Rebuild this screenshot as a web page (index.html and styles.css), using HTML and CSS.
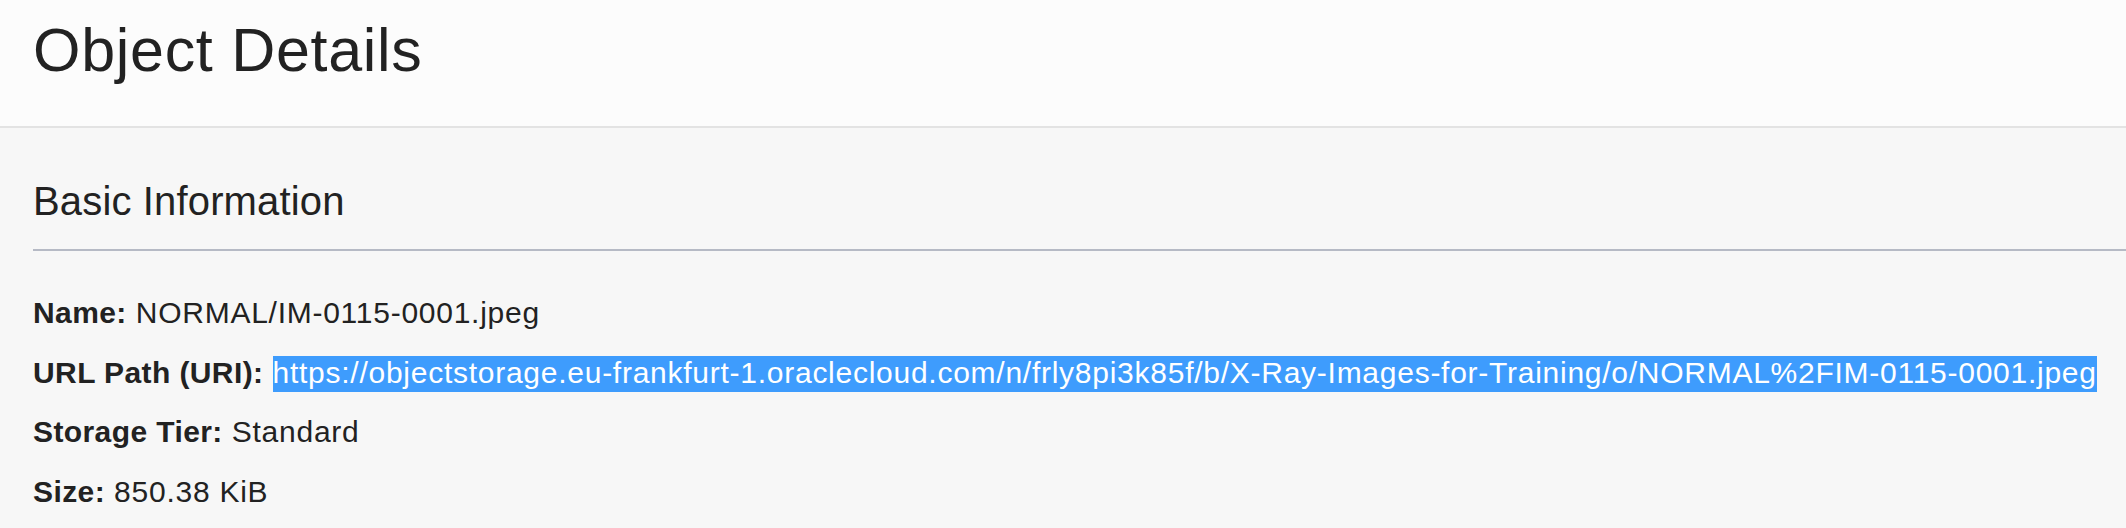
FILE: index.html
```html
<!DOCTYPE html>
<html lang="en">
<head>
<meta charset="utf-8">
<title>Object Details</title>
<link rel="stylesheet" href="styles.css">
</head>
<body>
<header class="page-header">
  <h1 class="page-title">Object Details</h1>
</header>
<main class="details">
  <h2 class="section-title">Basic Information</h2>
  <div class="info-list">
    <div class="info-row"><span class="label">Name:</span> NORMAL/IM-0115-0001.jpeg</div>
    <div class="info-row"><span class="label">URL Path (URI):</span> <span class="selected">https://objectstorage.eu-frankfurt-1.oraclecloud.com/n/frly8pi3k85f/b/X-Ray-Images-for-Training/o/NORMAL%2FIM-0115-0001.jpeg</span></div>
    <div class="info-row"><span class="label">Storage Tier:</span> Standard</div>
    <div class="info-row"><span class="label">Size:</span> 850.38 KiB</div>
  </div>
</main>
</body>
</html>
```
FILE: styles.css
```css
html, body {
  margin: 0;
  padding: 0;
}
body {
  background: #f7f7f7;
  color: #222222;
  font-family: "Liberation Sans", Arial, Helvetica, sans-serif;
  overflow: hidden;
}
.page-header {
  background: #fcfcfc;
  border-bottom: 2px solid #e3e3e3;
  padding: 20px 0 45px 33px;
}
.page-title {
  margin: 0;
  font-size: 61px;
  line-height: 61px;
  font-weight: 400;
  letter-spacing: 0.7px;
  color: #222222;
}
.details {
  padding: 53px 0 0 33px;
}
.section-title {
  margin: 0;
  font-size: 40px;
  line-height: 40px;
  font-weight: 400;
  letter-spacing: 0.15px;
  color: #222222;
  padding-bottom: 28px;
  border-bottom: 2px solid #b6bac5;
}
.info-list {
  display: flex;
  flex-direction: column;
  gap: 22.6px;
  padding-top: 43px;
}
.info-row {
  font-size: 30px;
  line-height: 37px;
  letter-spacing: 0.74px;
  white-space: nowrap;
  color: #222222;
}
.label {
  font-weight: 700;
  letter-spacing: 0.4px;
}
.selected {
  background: #3e9cfd;
  color: #ffffff;
  padding: 0 0 3px;
}
```
